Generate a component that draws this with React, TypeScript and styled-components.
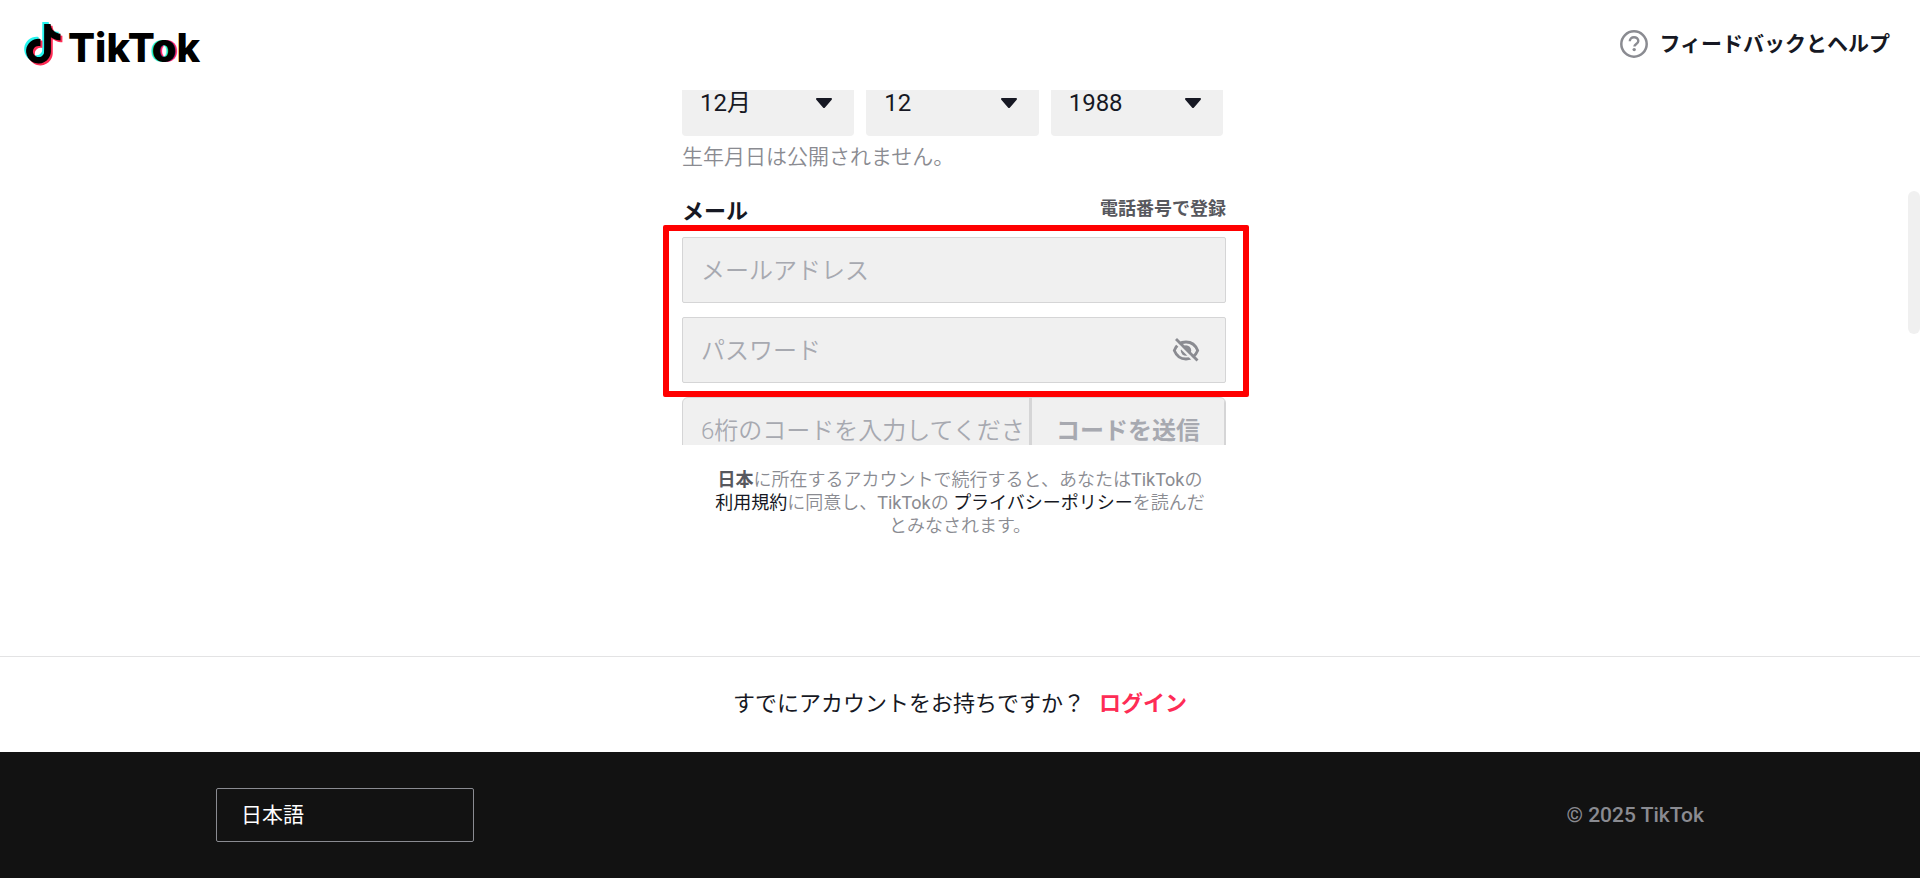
import React from "react";
import styled, { createGlobalStyle } from "styled-components";

const color = {
  text: "#161823",
  muted: "#8a8b91",
  placeholder: "#a7a9b0",
  field: "#f0f0f0",
  line: "#d5d5d6",
  brand: "#fe2c55",
  cyan: "#25f4ee",
  dark: "#121212",
};

const GlobalStyle = createGlobalStyle`
  * { box-sizing: border-box; }
  body {
    margin: 0;
    background: #fff;
    color: ${color.text};
    font-family: Roboto, "Noto Sans CJK JP", sans-serif;
  }
  button, input, select { font-family: inherit; }
  a { color: inherit; text-decoration: none; }
`;

const Page = styled.div`
  display: flex;
  flex-direction: column;
  height: 100vh;
  min-height: 640px;
`;

const Header = styled.header`
  flex: none;
  display: flex;
  align-items: center;
  justify-content: space-between;
  height: 90px;
  padding: 0 30px 2px 24px;
`;

const Logo = styled.a`
  display: flex;
  align-items: center;
  gap: 5px;
  color: #000;
`;

const Wordmark = styled.span`
  padding-top: 8px;
  font: 800 40px/44px Inter, sans-serif;
`;

const WordmarkRing = styled.span`
  text-shadow: -2px 0 ${color.cyan}, 2px 0 ${color.brand};
`;

const HelpLink = styled.a`
  display: flex;
  align-items: center;
  gap: 11px;
  font-size: 21px;
  font-weight: 700;
  line-height: 30px;
`;

const Scroller = styled.main`
  position: relative;
  flex: 1 1 0;
  min-height: 0;
  overflow: hidden;
  padding-right: 12px;
`;

const ScrollThumb = styled.div`
  position: absolute;
  top: 101px;
  right: 0;
  width: 12px;
  height: 143px;
  border-radius: 6px;
  background: ${color.field};
`;

const Form = styled.form`
  width: 544px;
  max-width: 100%;
  margin: -20px auto 0;
`;

const DateRow = styled.div`
  display: grid;
  grid-template-columns: repeat(3, 1fr);
  gap: 12px;
  padding-right: 3px;
`;

const SelectBox = styled.div`
  display: grid;
  align-items: center;
  border-radius: 4px;
  background: ${color.field};
  & > * { grid-area: 1 / 1; }
  & > svg { justify-self: end; margin-right: 22px; pointer-events: none; }
`;

const Select = styled.select`
  appearance: none;
  width: 100%;
  height: 66px;
  padding: 0 44px 0 18px;
  border: 0;
  background: none;
  color: ${color.text};
  font-size: 24px;
`;

const Hint = styled.p`
  margin: 9px 0 28px;
  color: ${color.muted};
  font-size: 21px;
  font-weight: 350;
  line-height: 24px;
`;

const LabelRow = styled.div`
  display: flex;
  align-items: flex-start;
  justify-content: space-between;
  margin-bottom: 10px;
`;

const Label = styled.label`
  font-size: 22px;
  font-weight: 700;
  line-height: 30px;
`;

const PhoneLink = styled.a`
  color: #57585e;
  font-size: 18px;
  font-weight: 700;
  line-height: 24px;
`;

const Credentials = styled.div`
  position: relative;
  display: grid;
  gap: 14px;
  margin-bottom: 14px;
`;

const Highlight = styled.div`
  position: absolute;
  inset: -12px -23px -14px -19px;
  border: 6px solid #f00;
  border-radius: 2px;
  pointer-events: none;
`;

const Field = styled.div<{ $radius?: number }>`
  display: flex;
  align-items: center;
  height: 66px;
  overflow: hidden;
  border: 1px solid ${color.line};
  border-radius: ${(p) => p.$radius ?? 2}px;
  background: ${color.field};
`;

const Input = styled.input`
  flex: 1;
  min-width: 0;
  height: 100%;
  margin-right: 6px;
  padding: 1px 0 0 18px;
  border: 0;
  outline: 0;
  background: none;
  color: ${color.text};
  font-size: 24px;
  font-weight: 350;
  &::placeholder { color: ${color.placeholder}; opacity: 1; }
`;

const RevealButton = styled.button`
  display: flex;
  margin-right: 25px;
  padding: 0;
  border: 0;
  background: none;
`;

const CodeButton = styled.button`
  width: 196px;
  height: 100%;
  padding: 0 0 4px;
  border: solid ${color.line};
  border-width: 0 1px 0 3px;
  background: none;
  color: ${color.placeholder};
  font-size: 24px;
  font-weight: 700;
`;

const Legal = styled.p`
  flex: none;
  margin: 0;
  padding: 23px 0 119px;
  color: ${color.muted};
  font-size: 18px;
  font-weight: 350;
  line-height: 23px;
  text-align: center;
`;

const Country = styled.strong`
  color: #57585e;
  font-weight: 700;
`;

const Brand = styled.span`
  font-weight: 400;
`;

const LegalLink = styled.a`
  color: ${color.text};
  font-weight: 400;
`;

const LoginBar = styled.div`
  flex: none;
  display: flex;
  align-items: center;
  justify-content: center;
  gap: 14px;
  height: 96px;
  padding-bottom: 8px;
  border-top: 1px solid #e3e3e4;
  font-size: 22px;
`;

const LoginLink = styled.a`
  color: ${color.brand};
  font-weight: 700;
`;

const Footer = styled.footer`
  flex: none;
  display: flex;
  align-items: center;
  justify-content: space-between;
  height: 126px;
  padding: 0 216px;
  background: ${color.dark};
`;

const LanguageSelect = styled.select`
  appearance: none;
  width: 258px;
  height: 54px;
  padding: 0 24px;
  border: 1px solid ${color.muted};
  border-radius: 2px;
  background: none;
  color: #fff;
  font-size: 21px;
`;

const Copyright = styled.span`
  color: ${color.muted};
  font-size: 21px;
  font-weight: 500;
`;

const NOTE =
  "M12.525.02c1.31-.02 2.61-.01 3.91-.02.08 1.53.63 3.09 1.75 4.17 1.12 1.11 2.7 1.62 4.24 1.79v4.03c-1.44-.05-2.89-.35-4.2-.97-.57-.26-1.1-.59-1.62-.93-.01 2.92.01 5.84-.02 8.75-.08 1.4-.54 2.79-1.35 3.94-1.31 1.92-3.58 3.17-5.91 3.21-1.43.08-2.86-.31-4.08-1.03-2.02-1.19-3.44-3.37-3.65-5.71-.02-.5-.03-1-.01-1.49.18-1.9 1.12-3.72 2.58-4.96 1.66-1.44 3.98-2.13 6.15-1.72.02 1.48-.04 2.96-.04 4.44-.99-.32-2.15-.23-3.02.37-.63.41-1.11 1.04-1.36 1.75-.21.51-.15 1.07-.14 1.61.24 1.64 1.82 3.02 3.5 2.87 1.12-.01 2.19-.66 2.77-1.61.19-.33.4-.67.41-1.06.1-1.79.06-3.57.07-5.36.01-4.03-.01-8.05.02-12.07z";

const NoteIcon = () => (
  <svg width="39" height="44" viewBox="0 0 39 44" aria-hidden="true">
    <path d={NOTE} fill={color.cyan} transform="translate(-2.4 0) scale(1.65)" />
    <path d={NOTE} fill={color.brand} transform="translate(1.4 3.8) scale(1.65)" />
    <path d={NOTE} fill="#000" transform="translate(-.5 1.9) scale(1.65)" />
  </svg>
);

const HelpIcon = () => (
  <svg width="28" height="28" viewBox="0 0 28 28" fill="none" aria-hidden="true">
    <circle cx="14" cy="14" r="12.7" stroke={color.muted} strokeWidth="2.5" />
    <path
      d="M9.800 11.200c0-2.400 1.800-4 4.200-4s4.300 1.500 4.300 3.800c0 3-3.900 3-3.900 5.600"
      stroke={color.muted}
      strokeWidth="2.4"
    />
    <circle cx="14.2" cy="19.6" r="1.7" fill={color.muted} />
  </svg>
);

const Caret = () => (
  <svg width="16" height="10" viewBox="0 0 16 10" aria-hidden="true">
    <path d="M1 0h14c1 0 1.300 1 .7 1.700L9 9.400a1.300 1.300 0 0 1-2 0L.3 1.700C-.3 1 0 0 1 0z" fill={color.text} />
  </svg>
);

const EyeOffIcon = () => (
  <svg width="28" height="24" viewBox="0 0 28 24" fill="none" aria-hidden="true">
    <path
      d="M2.300 12.500C4.500 7 9 4 14 4s9.500 3 11.700 8.500C23.500 18 19 21 14 21s-9.500-3-11.700-8.500z"
      stroke={color.muted}
      strokeWidth="2.8"
    />
    <circle cx="14" cy="12.500" r="5.200" fill={color.muted} />
    <path d="M2 2.500l21 21" stroke={color.field} strokeWidth="2.6" />
    <path d="M4 1l21.500 21.500" stroke={color.muted} strokeWidth="2.8" />
  </svg>
);

const DateSelect = ({ label, value }: { label: string; value: string }) => (
  <SelectBox>
    <Select aria-label={label} defaultValue={value}>
      <option>{value}</option>
    </Select>
    <Caret />
  </SelectBox>
);

export default function App() {
  return (
    <>
      <GlobalStyle />
      <Page>
        <Header>
          <Logo href="#">
            <NoteIcon />
            <Wordmark>
              TikT<WordmarkRing>o</WordmarkRing>k
            </Wordmark>
          </Logo>
          <HelpLink href="#">
            <HelpIcon />
            フィードバックとヘルプ
          </HelpLink>
        </Header>

        <Scroller>
          <Form>
            <DateRow>
              <DateSelect label="月" value="12月" />
              <DateSelect label="日" value="12" />
              <DateSelect label="年" value="1988" />
            </DateRow>
            <Hint>生年月日は公開されません。</Hint>
            <LabelRow>
              <Label htmlFor="email">メール</Label>
              <PhoneLink href="#">電話番号で登録</PhoneLink>
            </LabelRow>
            <Credentials>
              <Field>
                <Input id="email" type="email" placeholder="メールアドレス" />
              </Field>
              <Field>
                <Input type="password" aria-label="パスワード" placeholder="パスワード" />
                <RevealButton type="button" aria-label="パスワードを表示">
                  <EyeOffIcon />
                </RevealButton>
              </Field>
              <Highlight />
            </Credentials>
            <Field $radius={6}>
              <Input aria-label="認証コード" placeholder="6桁のコードを入力してください" />
              <CodeButton type="button">コードを送信</CodeButton>
            </Field>
          </Form>
          <ScrollThumb />
        </Scroller>

        <Legal>
          <Country>日本</Country>に所在するアカウントで続行すると、あなたは<Brand>TikTok</Brand>の
          <br />
          <LegalLink href="#">利用規約</LegalLink>に同意し、<Brand>TikTok</Brand>の{" "}
          <LegalLink href="#">プライバシーポリシー</LegalLink>を読んだ
          <br />
          とみなされます。
        </Legal>

        <LoginBar>
          すでにアカウントをお持ちですか？
          <LoginLink href="#">ログイン</LoginLink>
        </LoginBar>

        <Footer>
          <LanguageSelect aria-label="言語" defaultValue="日本語">
            <option>日本語</option>
          </LanguageSelect>
          <Copyright>© 2025 TikTok</Copyright>
        </Footer>
      </Page>
    </>
  );
}
